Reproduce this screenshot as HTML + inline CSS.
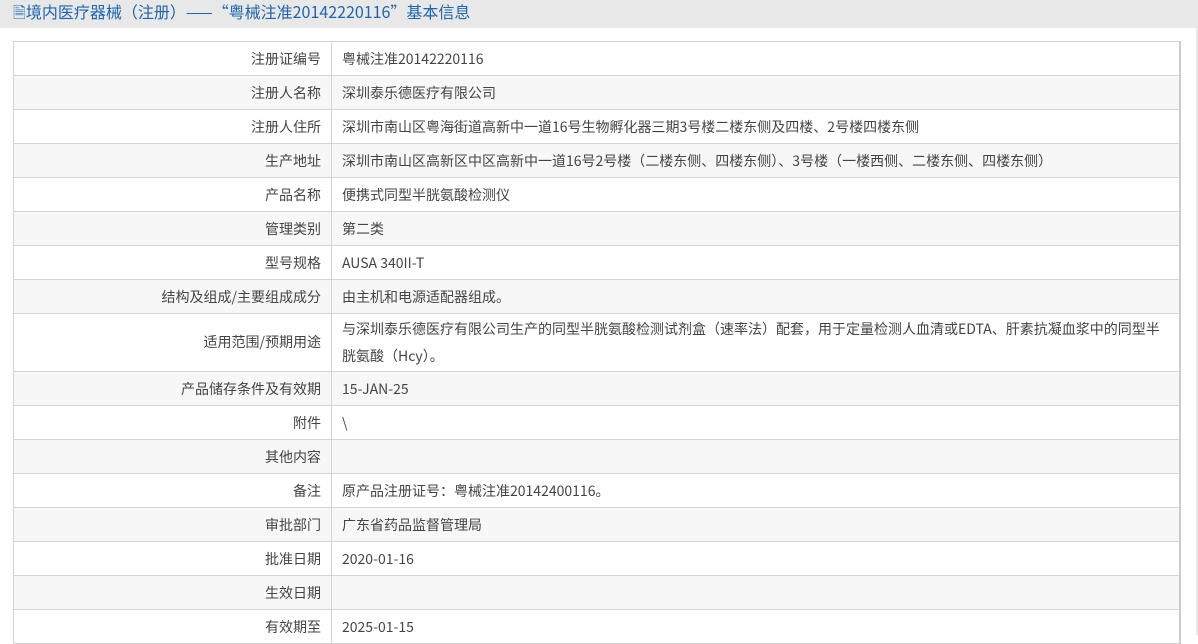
<!DOCTYPE html>
<html><head><meta charset="utf-8"><style>
body{margin:0;width:1198px;height:635px;overflow:hidden;background:#fff;font-family:"Liberation Sans","Noto Sans CJK SC",sans-serif;}
.hd{height:28px;background:#e8e8e8;color:#1d64ad;font-size:16px;line-height:22px;padding-left:13px;width:1196px;box-sizing:border-box;font-family:"Noto Sans CJK SC",sans-serif}
.sb{position:absolute;right:0;top:0;width:2px;height:635px;background:#e8e8e8}
table{position:absolute;left:13px;top:41px;width:1168px;border-collapse:collapse;font-size:14px;color:#444;border-right:2px solid #ccc;font-family:"Noto Sans CJK SC",sans-serif}
td{border:1px solid #d4d4d4;height:34px;padding:0 10px;box-sizing:border-box;line-height:20px}
td.l{width:318px;text-align:right}
tr:nth-child(even) td{background:#f7f7f7}
td.m{line-height:27px;height:58px}
</style></head><body>
<div class="hd">🗎境内医疗器械（注册）——“粤械注准20142220116”基本信息</div>
<div class="sb"></div>
<table>
<tr><td class="l">注册证编号</td><td>粤械注准20142220116</td></tr>
<tr><td class="l">注册人名称</td><td>深圳泰乐德医疗有限公司</td></tr>
<tr><td class="l">注册人住所</td><td>深圳市南山区粤海街道高新中一道16号生物孵化器三期3号楼二楼东侧及四楼、2号楼四楼东侧</td></tr>
<tr><td class="l">生产地址</td><td>深圳市南山区高新区中区高新中一道16号2号楼（二楼东侧、四楼东侧）、3号楼（一楼西侧、二楼东侧、四楼东侧）</td></tr>
<tr><td class="l">产品名称</td><td>便携式同型半胱氨酸检测仪</td></tr>
<tr><td class="l">管理类别</td><td>第二类</td></tr>
<tr><td class="l">型号规格</td><td>AUSA 340II-T</td></tr>
<tr><td class="l">结构及组成/主要组成成分</td><td>由主机和电源适配器组成。</td></tr>
<tr><td class="l m">适用范围/预期用途</td><td class="m">与深圳泰乐德医疗有限公司生产的同型半胱氨酸检测试剂盒（速率法）配套，用于定量检测人血清或EDTA、肝素抗凝血浆中的同型半<br>胱氨酸（Hcy）。</td></tr>
<tr><td class="l">产品储存条件及有效期</td><td>15-JAN-25</td></tr>
<tr><td class="l">附件</td><td>\</td></tr>
<tr><td class="l">其他内容</td><td></td></tr>
<tr><td class="l">备注</td><td>原产品注册证号：粤械注准20142400116。</td></tr>
<tr><td class="l">审批部门</td><td>广东省药品监督管理局</td></tr>
<tr><td class="l">批准日期</td><td>2020-01-16</td></tr>
<tr><td class="l">生效日期</td><td></td></tr>
<tr><td class="l">有效期至</td><td>2025-01-15</td></tr>
</table>
</body></html>
